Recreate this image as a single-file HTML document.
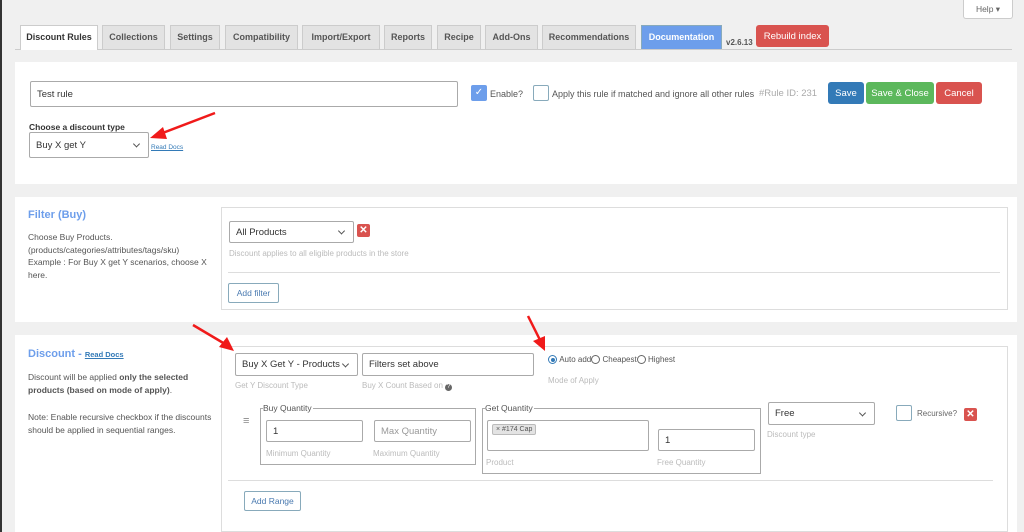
<!DOCTYPE html>
<html><head><meta charset="utf-8"><style>
*{box-sizing:border-box;margin:0;padding:0}
body{width:1024px;height:532px;overflow:hidden;background:#f0f0f0;font-family:"Liberation Sans",sans-serif;font-size:9px;color:#444;position:relative}
.a{position:absolute}
.tab{position:absolute;top:25px;height:24px;background:#e3e3e3;border:1px solid #ccc;border-bottom:none;font-weight:bold;font-size:9px;color:#555;text-align:center;line-height:23px}
.panel{position:absolute;left:15px;width:1002px;background:#fff}
.inp{position:absolute;border:1px solid #aaa;border-radius:2px;background:#fff;font-size:9.5px;color:#333;padding-left:6px;display:flex;align-items:center}
.sel:after{content:"";position:absolute;right:9px;top:50%;width:4px;height:4px;border-right:1.3px solid #555;border-bottom:1.3px solid #555;transform:translateY(-70%) rotate(45deg)}
.btn{position:absolute;color:#fff;font-size:9.5px;border-radius:3px;display:flex;align-items:center;justify-content:center}
.hint{position:absolute;color:#bbb;font-size:8px}
.x{position:absolute;width:13px;height:13px;background:#d9534f;border-radius:2px;color:#fff;font-size:10px;font-weight:bold;text-align:center;line-height:13px}
.cb{position:absolute;width:16px;height:16px;border:1px solid #8ab;border-radius:2px;background:#fff}
.box{position:absolute;border:1px solid #ddd}
.fs{position:absolute;border:1px solid #aaa}
.lg{position:absolute;top:-6px;left:2px;background:#fff;font-size:8.5px;color:#555;padding-right:1px}
.ph{color:#999}
</style></head><body>
<div class="a" style="left:0;top:0;width:2px;height:532px;background:#333"></div>
<div class="a" style="left:963px;top:0;width:50px;height:19px;background:#fff;border:1px solid #ccc;border-top:none;border-radius:0 0 3px 3px;font-size:8.5px;color:#666;text-align:center;line-height:18px">Help ▾</div>
<div class="a" style="left:15px;top:49px;width:997px;height:1px;background:#ccc"></div>
<div class="tab" style="left:20px;width:78px;background:#fff;color:#333;height:25px">Discount Rules</div>
<div class="tab" style="left:102px;width:63px">Collections</div>
<div class="tab" style="left:170px;width:50px">Settings</div>
<div class="tab" style="left:225px;width:73px">Compatibility</div>
<div class="tab" style="left:302px;width:78px">Import/Export</div>
<div class="tab" style="left:384px;width:48px">Reports</div>
<div class="tab" style="left:437px;width:44px">Recipe</div>
<div class="tab" style="left:485px;width:53px">Add-Ons</div>
<div class="tab" style="left:542px;width:94px">Recommendations</div>
<div class="tab" style="left:641px;width:81px;background:#6d9eeb;border-color:#8ab;color:#fff">Documentation</div>
<div class="a" style="left:726px;top:38px;font-size:8px;font-weight:bold;color:#555">v2.6.13</div>
<div class="btn" style="left:756px;top:25px;width:73px;height:22px;background:#d9534f">Rebuild index</div>

<div class="panel" style="top:62px;height:122px"></div>
<div class="inp" style="left:30px;top:81px;width:428px;height:26px">Test rule</div>
<div class="a" style="left:471px;top:85px;width:16px;height:16px;background:#6d9eeb;border-radius:2px;color:#fff;text-align:center;font-size:10px;line-height:16px">✓</div>
<div class="a" style="left:490px;top:89px;color:#555">Enable?</div>
<div class="cb" style="left:533px;top:85px"></div>
<div class="a" style="left:552px;top:89px;color:#555">Apply this rule if matched and ignore all other rules</div>
<div class="a" style="left:759px;top:88px;color:#aaa;font-size:9.5px">#Rule ID: 231</div>
<div class="btn" style="left:828px;top:82px;width:36px;height:22px;background:#337ab7">Save</div>
<div class="btn" style="left:866px;top:82px;width:68px;height:22px;background:#5cb85c">Save &amp; Close</div>
<div class="btn" style="left:936px;top:82px;width:46px;height:22px;background:#d9534f">Cancel</div>
<div class="a" style="left:29px;top:122px;font-weight:bold;font-size:8.5px;color:#333">Choose a discount type</div>
<div class="inp sel" style="left:29px;top:132px;width:120px;height:26px">Buy X get Y</div>
<div class="a" style="left:151px;top:144px;font-size:6.5px;color:#337ab7;text-decoration:underline">Read Docs</div>

<div class="panel" style="top:197px;height:125px"></div>
<div class="a" style="left:28px;top:209px;font-size:11px;font-weight:bold;color:#6d9eeb">Filter (Buy)</div>
<div class="a" style="left:28px;top:231px;line-height:12.7px;font-size:8.5px;color:#555">Choose Buy Products.<br>(products/categories/attributes/tags/sku)<br>Example : For Buy X get Y scenarios, choose X<br>here.</div>
<div class="box" style="left:221px;top:207px;width:787px;height:103px"></div>
<div class="inp sel" style="left:229px;top:221px;width:125px;height:22px">All Products</div>
<div class="x" style="left:357px;top:224px">✕</div>
<div class="hint" style="left:229px;top:249px">Discount applies to all eligible products in the store</div>
<div class="a" style="left:228px;top:272px;width:772px;height:1px;background:#ddd"></div>
<div class="a" style="left:228px;top:283px;width:51px;height:20px;border:1px solid #8ab;border-radius:2px;color:#4a7ab0;text-align:center;line-height:18px;font-size:8.5px">Add filter</div>

<div class="panel" style="top:335px;height:197px"></div>
<div class="a" style="left:28px;top:348px;font-size:11px;font-weight:bold;color:#6d9eeb">Discount - <span style="font-size:7.5px;color:#337ab7;text-decoration:underline">Read Docs</span></div>
<div class="a" style="left:28px;top:371px;line-height:12.5px;font-size:8.5px;color:#555">Discount will be applied <b>only the selected<br>products (based on mode of apply)</b>.</div>
<div class="a" style="left:28px;top:411px;line-height:12.5px;font-size:8.5px;color:#555">Note: Enable recursive checkbox if the discounts<br>should be applied in sequential ranges.</div>
<div class="box" style="left:221px;top:346px;width:787px;height:186px"></div>
<div class="inp sel" style="left:235px;top:353px;width:123px;height:23px">Buy X Get Y - Products</div>
<div class="inp" style="left:362px;top:353px;width:172px;height:23px">Filters set above</div>
<div class="hint" style="left:235px;top:381px">Get Y Discount Type</div>
<div class="hint" style="left:362px;top:381px">Buy X Count Based on <span style="display:inline-block;width:7px;height:7px;border-radius:50%;background:#666;color:#fff;font-size:6px;text-align:center;line-height:7px">?</span></div>
<div class="a" style="left:548px;top:355px;font-size:8px;color:#555;display:flex;align-items:center"><span style="width:9px;height:9px;border-radius:50%;border:1px solid #337ab7;display:inline-block;position:relative"><span style="position:absolute;left:1.5px;top:1.5px;width:4px;height:4px;border-radius:50%;background:#337ab7"></span></span>&nbsp;Auto add<span style="width:9px;height:9px;border-radius:50%;border:1px solid #666;display:inline-block"></span>&nbsp;Cheapest<span style="width:9px;height:9px;border-radius:50%;border:1px solid #666;display:inline-block"></span>&nbsp;Highest</div>
<div class="hint" style="left:548px;top:376px">Mode of Apply</div>
<div class="a" style="left:243px;top:415px;font-size:11px;color:#888">≡</div>
<div class="fs" style="left:260px;top:408px;width:216px;height:57px"><span class="lg">Buy Quantity</span></div>
<div class="inp" style="left:266px;top:420px;width:97px;height:22px">1</div>
<div class="inp ph" style="left:374px;top:420px;width:97px;height:22px">Max Quantity</div>
<div class="hint" style="left:266px;top:449px">Minimum Quantity</div>
<div class="hint" style="left:373px;top:449px">Maximum Quantity</div>
<div class="fs" style="left:482px;top:408px;width:279px;height:66px"><span class="lg">Get Quantity</span></div>
<div class="inp" style="left:487px;top:420px;width:162px;height:31px;align-items:flex-start;padding:3px 0 0 4px"><span style="background:#e3e3e3;border:1px solid #bbb;border-radius:2px;font-size:7px;padding:1px 3px;color:#555">× #174 Cap</span></div>
<div class="inp" style="left:658px;top:429px;width:97px;height:22px">1</div>
<div class="hint" style="left:486px;top:458px">Product</div>
<div class="hint" style="left:657px;top:458px">Free Quantity</div>
<div class="inp sel" style="left:768px;top:402px;width:107px;height:23px">Free</div>
<div class="hint" style="left:767px;top:430px">Discount type</div>
<div class="cb" style="left:896px;top:405px"></div>
<div class="a" style="left:917px;top:409px;font-size:8px;color:#666">Recursive?</div>
<div class="x" style="left:964px;top:408px">✕</div>
<div class="a" style="left:228px;top:480px;width:765px;height:1px;background:#ddd"></div>
<div class="a" style="left:244px;top:491px;width:57px;height:20px;border:1px solid #8ab;border-radius:2px;color:#4a7ab0;text-align:center;line-height:18px;font-size:8.5px">Add Range</div>

<svg class="a" style="left:0;top:0" width="1024" height="532">
<g stroke="#f01a1a" stroke-width="2.5" fill="#f01a1a">
<line x1="215" y1="113" x2="160" y2="134"/><polygon points="150,138 163,127 167,139" stroke="none"/>
<line x1="193" y1="325" x2="225" y2="344"/><polygon points="234,351 219,347 227,337" stroke="none"/>
<line x1="528" y1="316" x2="540" y2="340"/><polygon points="545,351 533,341 545,336" stroke="none"/>
</g></svg>
</body></html>
